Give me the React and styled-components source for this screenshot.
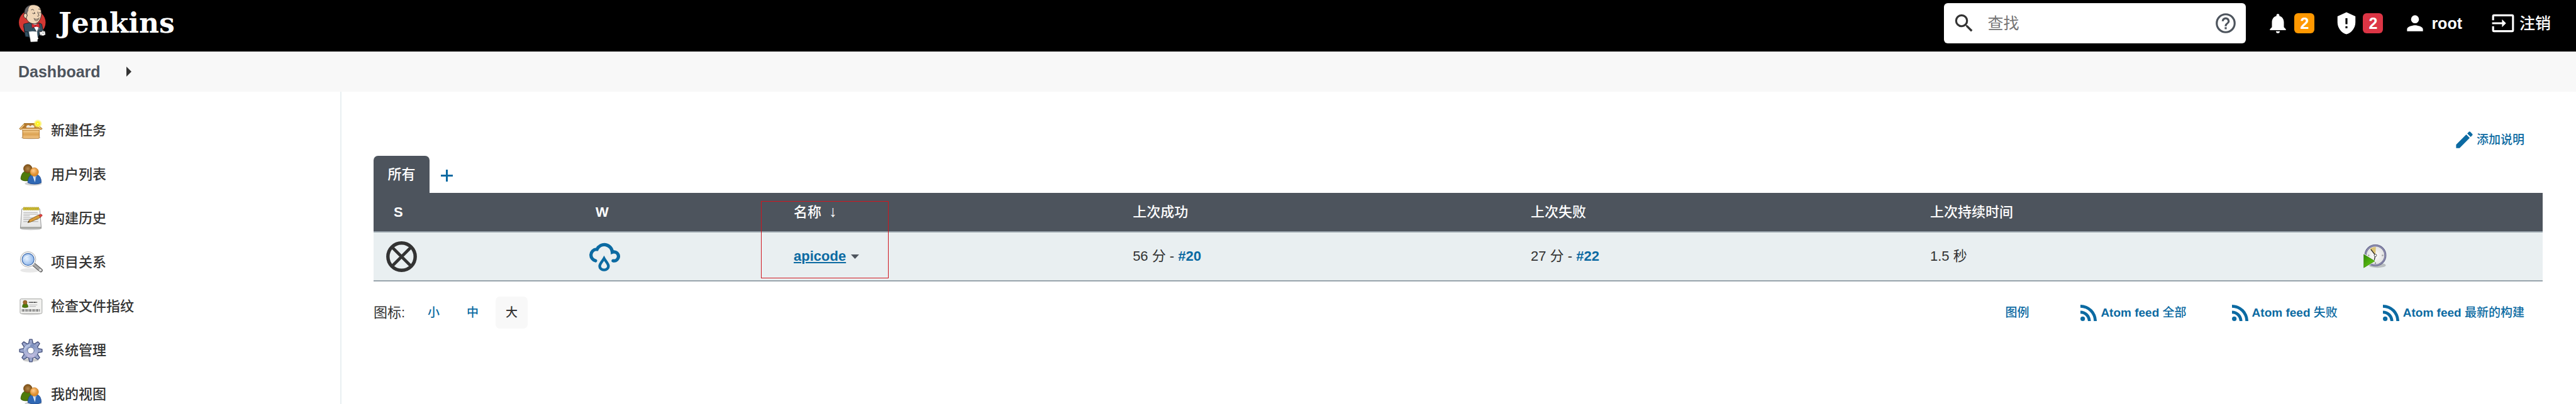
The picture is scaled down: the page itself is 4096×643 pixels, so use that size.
import React from "react";
import styled, { createGlobalStyle } from "styled-components";

const sans = '"Liberation Sans", "Noto Sans CJK SC", sans-serif';
const blue = "#0b6aa2";
const slate = "#4d545d";
const ink = "#333333";

const GlobalStyle = createGlobalStyle`
  *, *::before, *::after { box-sizing: border-box; }
  body { margin: 0; background: #fff; color: ${ink}; font-family: ${sans}; font-size: 22px; line-height: 32px; }
  a { color: inherit; text-decoration: none; }
  button, input { font: inherit; color: inherit; border: 0; padding: 0; background: none; }
  svg { display: block; flex: none; }
`;

const Page = styled.div`
  display: flex;
  flex-direction: column;
  height: 100vh;
  overflow: hidden;
`;

/* Header */
const Header = styled.header`
  display: flex;
  align-items: center;
  flex: none;
  height: 82px;
  padding: 0 40px 8px 29px;
  background: #000;
  color: #fff;
  font-size: 25px;
`;
const Brand = styled.a`
  display: flex;
  align-items: center;
  gap: 20px;
  margin-right: auto;
`;
const BrandName = styled.span`
  font-family: "DejaVu Serif", serif;
  font-size: 44px;
  line-height: 60px;
  font-weight: 700;
`;
const SearchBox = styled.form`
  display: flex;
  align-items: center;
  gap: 18px;
  width: 480px;
  height: 64px;
  padding: 0 13px;
  border-radius: 6px;
  background: #fff;
  color: ${ink};
`;
const SearchInput = styled.input`
  flex: 1;
  min-width: 0;
  height: 40px;
  outline: 0;
  &::placeholder { color: #757575; opacity: 1; }
`;
const HelpLink = styled.a`
  color: ${slate};
`;
const HeaderLinks = styled.nav`
  display: flex;
  align-items: center;
  gap: 32px;
  margin-left: 32px;
`;
const HeaderLink = styled.a`
  display: flex;
  align-items: center;
  gap: 7px;
  font-weight: ${(p) => p.$weight || 700};
  margin-right: ${(p) => (p.$spaced ? 14 : 0)}px;
`;
const Badge = styled.span`
  width: 32px;
  height: 32px;
  border-radius: 6px;
  background: ${(p) => p.$color};
  text-align: center;
`;

/* Breadcrumbs */
const Crumbs = styled.nav`
  display: flex;
  align-items: center;
  flex: none;
  gap: 41px;
  height: 64px;
  padding-left: 29px;
  background: #f8f8f8;
  color: ${slate};
  font-size: 25px;
  font-weight: 700;
`;

/* Body */
const Body = styled.div`
  display: flex;
  flex: 1;
`;
const Side = styled.aside`
  flex: none;
  width: 543px;
  padding: 27px 0 0 30px;
  border-right: 2px solid #e9eff1;
`;
const TaskLink = styled.a`
  display: flex;
  align-items: center;
  gap: 13px;
  height: 70px;
  font-weight: 500;
`;
const Main = styled.main`
  flex: 1;
  min-width: 0;
  padding: 59px 53px 0 51px;
`;
const Description = styled.div`
  display: flex;
  justify-content: flex-end;
  padding-right: 29px;
  margin-bottom: 8px;
`;
const SmallLink = styled.a`
  display: flex;
  align-items: center;
  gap: ${(p) => p.$gap || 6}px;
  height: 35px;
  color: ${blue};
  font-size: 19px;
  font-weight: 500;
`;
const Tabs = styled.div`
  display: flex;
  height: 59px;
`;
const Tab = styled.a`
  width: 89px;
  border-radius: 7px 7px 0 0;
  background: ${slate};
  color: #fff;
  text-align: center;
  line-height: 60px;
  font-weight: 500;
`;
const AddTab = styled.a`
  display: flex;
  align-items: center;
  padding: 3px 18px 0;
  color: ${blue};
`;

/* Jobs table */
const TableWrap = styled.div`
  position: relative;
`;
const Table = styled.table`
  width: 100%;
  table-layout: fixed;
  border-collapse: separate;
  border-spacing: 0;
  white-space: nowrap;
`;
const Col = styled.col`
  width: ${(p) => p.$share};
`;
const Th = styled.th`
  height: 63px;
  padding: 0 0 0 ${(p) => (p.$icon ? 32 : 20)}px;
  border-bottom: 2px solid #98a3ab;
  background: ${slate};
  color: #fff;
  text-align: left;
  font-weight: ${(p) => (p.$icon ? 700 : 500)};
`;
const Td = styled.td`
  height: 78px;
  padding: 0 0 0 20px;
  border-bottom: 2px solid #98a3ab;
  background: #e9eff1;
`;
const SortMark = styled.span`
  margin-left: 12px;
  font-family: "Liberation Serif", serif;
  font-size: 25px;
  font-weight: 400;
`;
const BuildLink = styled.a`
  color: ${blue};
  font-weight: 700;
`;
const JobCell = styled.div`
  display: flex;
  align-items: center;
  gap: 8px;
`;
const JobLink = styled.a`
  color: ${blue};
  font-weight: 700;
  text-decoration: underline;
  text-decoration-thickness: 2px;
  text-underline-offset: 2px;
  text-decoration-skip-ink: auto;
`;
const Highlight = styled.div`
  position: absolute;
  left: 17.85%;
  top: 13px;
  width: 203px;
  height: 123px;
  border: 1px solid #d0161f;
  pointer-events: none;
`;

/* Table footer */
const Footer = styled.div`
  display: flex;
  align-items: center;
  margin-top: 24px;
  padding-right: 29px;
`;
const Sizes = styled.div`
  display: flex;
  align-items: center;
  gap: 11px;
  margin-right: auto;
`;
const SizeLabel = styled.span`
  width: 59px;
`;
const SizeButton = styled.button`
  width: 51px;
  height: 51px;
  border-radius: 7px;
  background: ${(p) => (p.$active ? "#f8f8f8" : "transparent")};
  color: ${(p) => (p.$active ? ink : blue)};
  font-size: 19px;
  font-weight: 500;
`;
const Feeds = styled.nav`
  display: flex;
  gap: 72px;
`;
const LegendLink = styled(SmallLink)`
  margin-right: 10px;
`;
const FeedText = styled.span`
  white-space: pre;
`;

const Glyph = ({ d, size = 38, box = "0 0 24 24", label }) => (
  <svg width={size} height={size} viewBox={box} fill="currentColor" fillRule="evenodd" role={label ? "img" : undefined} aria-label={label} aria-hidden={label ? undefined : true}>
    <path d={d} />
  </svg>
);

const paths = {
  search: "M15.5 14h-.79l-.28-.27A6.47 6.47 0 0 0 16 9.5 6.5 6.5 0 1 0 9.5 16c1.61 0 3.09-.59 4.23-1.57l.27.28v.79l5 4.99L20.49 19zM9.5 14a4.5 4.5 0 1 1 0-9 4.5 4.5 0 0 1 0 9z",
  help: "M11 18h2v-2h-2zm1-16a10 10 0 1 0 0 20 10 10 0 0 0 0-20zm0 18a8 8 0 1 1 0-16 8 8 0 0 1 0 16zm0-14a4 4 0 0 0-4 4h2c0-1.1.9-2 2-2s2 .9 2 2c0 2-3 1.75-3 5h2c0-2.25 3-2.5 3-5a4 4 0 0 0-4-4z",
  bell: "M12 22c1.1 0 2-.9 2-2h-4c0 1.1.89 2 2 2zm6-6v-5c0-3.07-1.64-5.64-4.5-6.32V4c0-.83-.67-1.5-1.5-1.5s-1.5.67-1.5 1.5v.68C7.63 5.36 6 7.92 6 11v5l-2 2v1h16v-1z",
  shield: "M12 1 3 5v6c0 5.55 3.84 10.74 9 12 5.16-1.26 9-6.45 9-12V5zM11 7h2v6h-2zM11 15h2v2h-2z",
  user: "M12 12a4 4 0 1 0 0-8 4 4 0 0 0 0 8zm0 2c-2.67 0-8 1.34-8 4v2h16v-2c0-2.66-5.33-4-8-4z",
  logout: "M21 3H3a2 2 0 0 0-2 2v4h2V5h18v14H3v-4H1v4a2 2 0 0 0 2 2h18a2 2 0 0 0 2-2V5a2 2 0 0 0-2-2zM11 16l4-4-4-4v3H1v2h10z",
  pencil: "M3 17.25V21h3.75L17.81 9.94l-3.75-3.75zM20.71 7.04a1 1 0 0 0 0-1.41l-2.34-2.34a1 1 0 0 0-1.41 0l-1.83 1.83 3.75 3.75z",
  rss: "M6.18 15.64a2.18 2.18 0 1 1 0 4.36 2.18 2.18 0 0 1 0-4.36M4 4.44A15.56 15.56 0 0 1 19.56 20h-2.83A12.73 12.73 0 0 0 4 7.27zM4 10.1a9.9 9.9 0 0 1 9.9 9.9h-2.83A7.07 7.07 0 0 0 4 12.93z",
};

const Butler = () => (
  <svg width="44" height="60" viewBox="108 24 164 226" aria-hidden="true">
    <ellipse cx="191" cy="132" rx="80" ry="76" fill="#d33833" />
    <path d="M140 142 178 132l20 18 36-15 14 8 8 40-20 6-6 28-20 8-60-8-4-22z" fill="#335061" stroke="#101820" strokeWidth="3" />
    <path d="M188 140 218 190 238 172 230 140z" fill="#fff" stroke="#101820" strokeWidth="2" />
    <path d="M194 158 210 184 198 176zM232 158 222 184 234 174z" fill="#6d8ba0" stroke="#101820" strokeWidth="2" />
    <path d="M158 42c14-16 44-20 64-10 18 8 24 28 24 50-2 28-16 54-40 58-24 2-44-14-50-32-14 0-18-16-12-26 0-18 4-30 14-40z" fill="#f0d6b7" stroke="#231f20" strokeWidth="3" />
    <path d="M180 29c-24 4-38 26-35 50l8 4c2 6 4 8 8 10-4-16 0-24 4-30 0-16 6-26 15-34z" fill="#6d6b6d" stroke="#231f20" strokeWidth="2" />
    <path d="M143 82c-6 8-2 24 12 26l6-20c-6-10-12-12-18-6z" fill="#f0d6b7" stroke="#231f20" strokeWidth="3" />
    <path d="M184 58q9-10 18 2M228 52q8-4 12 6M192 76q8 9 15 0M232 72q6 8 11-2M224 68q2 14 8 22-5 8-11 4M200 108q18 12 34-4M202 114q16 18 28-4M203 70l4 10" fill="none" stroke="#231f20" strokeWidth="3" />
    <path d="M188 140 208 148 232 138 236 162 214 156 190 164z" fill="#e32b31" stroke="#6b1014" strokeWidth="2" />
    <path d="M206 146h9v12h-9z" fill="#b51d24" />
    <path d="M172 188c16-4 34-2 48 0l2 58-40 2z" fill="#fff" stroke="#d8d8d8" strokeWidth="2" />
    <path d="M218 190l4 24 6 16-8 6z" fill="#fff" />
    <path d="M234 186l10 4 10-10 14 6 2 20-14 6-20-4z" fill="#fff" stroke="#231f20" strokeWidth="2" />
    <path d="M252 186l10 2M250 196l12 2M240 202l8 2" stroke="#231f20" strokeWidth="2" />
    <path d="M138 150l8 38 18 0 8 34" fill="none" stroke="#101820" strokeWidth="3" />
  </svg>
);

const TaskIcon = ({ children }) => (
  <svg width="38" height="38" viewBox="0 0 48 48" aria-hidden="true">
    {children}
  </svg>
);

const PackageIcon = () => (
  <TaskIcon>
    <defs>
      <linearGradient id="boxFront" x1="0" y1="0" x2="0" y2="1">
        <stop offset="0" stopColor="#f4cc8c" /><stop offset="0.5" stopColor="#dba253" /><stop offset="1" stopColor="#f5c98a" />
      </linearGradient>
      <radialGradient id="spark">
        <stop offset="0" stopColor="#fff" /><stop offset="0.25" stopColor="#fff200" /><stop offset="0.55" stopColor="#fdf25a" /><stop offset="1" stopColor="#fdf25a" stopOpacity="0" />
      </radialGradient>
    </defs>
    <ellipse cx="24" cy="38" rx="20" ry="3" fill="#000" opacity="0.15" />
    <path d="M11 9.500H35L41 20H6z" fill="#b77b31" stroke="#8f5902" />
    <path d="M15 15q4-5 8 0 4-5 8 0v3H15z" fill="#f1ece2" />
    <path d="M11 9.500 1 20 4 22 12 13zM35 9.500 47 20 44 22 34 13z" fill="#eec07a" stroke="#8f5902" />
    <path d="M5 19.500H43L40.500 24H8z" fill="#fbdcae" stroke="#b87824" />
    <path d="M7.500 23H41V38q0 1.500-1.500 1.500H9q-1.500 0-1.500-1.500z" fill="url(#boxFront)" stroke="#a5671a" />
    <circle cx="38" cy="10" r="9" fill="url(#spark)" />
  </TaskIcon>
);

const PeopleIcon = () => (
  <TaskIcon>
    <defs>
      <radialGradient id="brownHead"><stop offset="0" stopColor="#b5874c" /><stop offset="1" stopColor="#7d4f14" /></radialGradient>
      <radialGradient id="orangeHead" cx="0.4" cy="0.35"><stop offset="0" stopColor="#ffcf91" /><stop offset="1" stopColor="#e08f2f" /></radialGradient>
    </defs>
    <ellipse cx="29" cy="42" rx="17" ry="4" fill="#000" opacity="0.18" />
    <path d="M4 30q2-11 9-13h11q8 3 8 12v4q-5 4-15 3.500Q7 37 4 33z" fill="#4e7a0a" stroke="#32520a" />
    <circle cx="18" cy="12" r="8.500" fill="url(#brownHead)" stroke="#70450f" />
    <path d="M18 40q0-13 8-16h11q8 3 8 16-4 3-13 3t-14-3z" fill="#2f68b5" stroke="#1c4587" />
    <path d="M28 26h7l-3 13z" fill="#edf3fb" />
    <path d="M31 26h3l-1 12z" fill="#8fb3e4" />
    <circle cx="31" cy="18.500" r="8.500" fill="url(#orangeHead)" stroke="#c67a22" />
  </TaskIcon>
);

const NotepadIcon = () => (
  <TaskIcon>
    <defs>
      <linearGradient id="sheet" x1="0" y1="0" x2="0" y2="1"><stop offset="0" stopColor="#fff" /><stop offset="1" stopColor="#e3e3e3" /></linearGradient>
    </defs>
    <ellipse cx="24" cy="45" rx="20" ry="2" fill="#000" opacity="0.2" />
    <path d="M6 4.500H42L45 43.500H3z" fill="url(#sheet)" stroke="#777" />
    <path d="M4 40.500H44.500V44H3.500z" fill="#a9aaa6" />
    <path d="M9 11.500H38M9 15H39M9 18.500H22M9 22.500H39M9 26H39M9 30H22M26 30H39" stroke="#a3a3a3" strokeWidth="1.200" />
    {[9, 13, 17, 21, 25, 29, 33, 37].map((x) => (
      <rect key={x} x={x} y="1" width="3" height="6" rx="1.500" fill="#f0dd37" stroke="#907f0a" />
    ))}
    <path d="M18 32 21.500 26 40 16.500 43.500 21.500 24 30.500z" fill="#d99c3c" stroke="#7a5210" />
    <path d="M18 32l2-3.500 1.500 2z" fill="#222" />
    <path d="M40 16.500l3.500-1.500q3.500 0 3.500 3l-3.500 3.500z" fill="#e0403c" stroke="#8a1d1d" strokeWidth="0.600" />
  </TaskIcon>
);

const LensIcon = () => (
  <TaskIcon>
    <defs>
      <radialGradient id="glass" cx="0.4" cy="0.45"><stop offset="0" stopColor="#e4f1ff" /><stop offset="1" stopColor="#9dc0ee" /></radialGradient>
    </defs>
    <ellipse cx="22" cy="39.500" rx="19" ry="4.500" fill="#000" opacity="0.09" />
    <path d="M29 27 44 39.500" stroke="#555" strokeWidth="7.500" strokeLinecap="round" />
    <path d="M29 27 44 39.500" stroke="#a9a9a9" strokeWidth="5" strokeLinecap="round" />
    <circle cx="43" cy="39" r="2.500" fill="#e4e4e4" />
    <circle cx="18.500" cy="17.500" r="15.500" fill="#f5f5f5" stroke="#9b9b9b" />
    <circle cx="18.500" cy="17.500" r="12" fill="url(#glass)" stroke="#3c6aae" strokeWidth="1.500" />
    <path d="M9 18q3-9 14-9-9 4-14 9z" fill="#fff" opacity="0.6" />
  </TaskIcon>
);

const CardIcon = () => (
  <TaskIcon>
    <ellipse cx="24" cy="39" rx="19" ry="2" fill="#000" opacity="0.15" />
    <rect x="2.500" y="8.500" width="44" height="29.500" rx="2" fill="#f2f2f0" stroke="#8b8d89" />
    <path d="M7 25q0-7 5.500-8 6 1 6 8-6 2.500-11.500 0z" fill="#4e7a0a" stroke="#32520a" strokeWidth="0.700" />
    <circle cx="12.500" cy="15.500" r="4" fill="#a06a2c" stroke="#70450f" strokeWidth="0.700" />
    <path d="M20 15.500h17" stroke="#222" strokeWidth="2" strokeDasharray="2 1 3 .7" />
    <path d="M21 20.500h16M21 23.500h13" stroke="#bbb" strokeWidth="1.500" />
    <path d="M6 31.500h37" stroke="#555" strokeWidth="5" strokeDasharray="1 1.200 1.600 1 .7 1.500" />
  </TaskIcon>
);

const GearIcon = () => (
  <TaskIcon>
    <defs>
      <linearGradient id="steel" x1="0" y1="0" x2="0" y2="1"><stop offset="0" stopColor="#6c82b4" /><stop offset="0.55" stopColor="#a7b2d6" /><stop offset="1" stopColor="#c9bfe2" /></linearGradient>
    </defs>
    <ellipse cx="24" cy="43" rx="16" ry="3.500" fill="#000" opacity="0.2" />
    <g fill="#8898c4" stroke="#4a5680" strokeWidth="2" strokeLinejoin="round">
      {[0, 45, 90, 135, 180, 225, 270, 315].map((a) => (
        <path key={a} d="M19.500 11 21.500 1.500h5L28.500 11z" transform={`rotate(${a} 24 24)`} />
      ))}
      <circle cx="24" cy="24" r="15" />
    </g>
    <circle cx="24" cy="24" r="14.800" fill="url(#steel)" />
    <g fill="#a4aed3">
      {[0, 45, 90, 135, 180, 225, 270, 315].map((a) => (
        <path key={a} d="M20.300 12 22 2.300h4L27.700 12z" transform={`rotate(${a} 24 24)`} opacity="0.700" />
      ))}
    </g>
    <path d="M10 20q4-9 14-10l-2 6q-8 1-10 10z" fill="#c8d3ec" opacity="0.700" />
    <circle cx="24" cy="24" r="6.500" fill="#fff" stroke="#4a5680" />
  </TaskIcon>
);

const ScheduleIcon = () => (
  <svg width="38" height="38" viewBox="0 0 48 48" role="img" aria-label="立即构建">
    <defs>
      <radialGradient id="dial"><stop offset="0" stopColor="#fff" /><stop offset="1" stopColor="#dedede" /></radialGradient>
      <linearGradient id="go" x1="0" y1="0" x2="1" y2="1"><stop offset="0" stopColor="#2f8a05" /><stop offset="1" stopColor="#6fd317" /></linearGradient>
    </defs>
    <ellipse cx="28" cy="42" rx="17" ry="5" fill="#000" opacity="0.2" />
    <circle cx="24" cy="22" r="20" fill="url(#dial)" stroke="#68688f" strokeWidth="4" />
    <circle cx="24" cy="22" r="20" fill="none" stroke="#b6b6d0" strokeWidth="1" />
    <path d="M24 22 13 9q5-4 12-4z" fill="#dcc477" />
    <path d="M24 22 15 10M24 22l-3 13" stroke="#222" strokeWidth="1.600" />
    <path d="M37 22h3M24 36v3M9 22h3" stroke="#999" strokeWidth="2.500" />
    <circle cx="24" cy="22" r="2.500" fill="#fff" stroke="#222" />
    <path d="M.700 20V47L23 33.500z" fill="url(#go)" stroke="#fff" strokeWidth="2.500" />
    <path d="M.700 20V47L23 33.500z" fill="url(#go)" stroke="#347a0c" strokeWidth="0.800" />
  </svg>
);

const AbortedIcon = () => (
  <svg width="49" height="49" viewBox="0 0 49 49" fill="none" stroke={ink} role="img" aria-label="已取消">
    <circle cx="24.500" cy="24.500" r="21.700" strokeWidth="5.400" />
    <path d="M9.500 9.500l30 30M39.500 9.500l-30 30" strokeWidth="4.600" />
  </svg>
);

const RainIcon = () => (
  <svg width="51" height="47" viewBox="0 0 64 59" fill="none" stroke={blue} strokeWidth="6.500" role="img" aria-label="天气">
    <path d="M15 37.700A11.600 11.600 0 0 1 16.500 14.800H18A16 16 0 0 1 48.500 20.500 9 9 0 1 1 50 37.700" strokeLinecap="round" />
    <path d="M32 33C29 38.500 23.300 43.500 23.300 48.500A8.700 7.500 0 0 0 40.700 48.500C40.700 43.500 35 38.500 32 33Z" strokeWidth="5.500" />
  </svg>
);

const tasks = [
  ["新建任务", PackageIcon],
  ["用户列表", PeopleIcon],
  ["构建历史", NotepadIcon],
  ["项目关系", LensIcon],
  ["检查文件指纹", CardIcon],
  ["系统管理", GearIcon],
  ["我的视图", PeopleIcon],
];
const shares = ["9.31%", "9.48%", "15.63%", "18.35%", "18.41%", "19.98%", "8.84%"];
const sizes = ["小", "中", "大"];
const feeds = ["全部", "失败", "最新的构建"];

export default function App() {
  return (
    <Page>
      <GlobalStyle />
      <Header>
        <Brand href="#">
          <Butler />
          <BrandName>Jenkins</BrandName>
        </Brand>
        <SearchBox role="search">
          <Glyph d={paths.search} />
          <SearchInput type="text" placeholder="查找" aria-label="查找" />
          <HelpLink href="#help" aria-label="帮助"><Glyph d={paths.help} /></HelpLink>
        </SearchBox>
        <HeaderLinks>
          <HeaderLink href="#alerts"><Glyph d={paths.bell} /><Badge $color="#ff9800">2</Badge></HeaderLink>
          <HeaderLink href="#security"><Glyph d={paths.shield} /><Badge $color="#dc3545">2</Badge></HeaderLink>
          <HeaderLink href="#user" $spaced><Glyph d={paths.user} />root</HeaderLink>
          <HeaderLink href="#logout" $weight={500}><Glyph d={paths.logout} />注销</HeaderLink>
        </HeaderLinks>
      </Header>
      <Crumbs>
        <a href="#dashboard">Dashboard</a>
        <svg width="8" height="16" viewBox="0 0 8 16" fill={ink} aria-hidden="true"><path d="M0 0 8 8 0 16z" /></svg>
      </Crumbs>
      <Body>
        <Side>
          {tasks.map(([name, Icon]) => (
            <TaskLink key={name} href="#task"><Icon />{name}</TaskLink>
          ))}
        </Side>
        <Main>
          <Description>
            <SmallLink href="#description" $gap={2}><Glyph d={paths.pencil} size={35} />添加说明</SmallLink>
          </Description>
          <Tabs>
            <Tab href="#all">所有</Tab>
            <AddTab href="#new" aria-label="新建视图">
              <svg width="19" height="19" viewBox="0 0 19 19" stroke={blue} strokeWidth="3" aria-hidden="true"><path d="M0 9.500H19M9.500 0V19" /></svg>
            </AddTab>
          </Tabs>
          <TableWrap>
            <Table>
              <colgroup>{shares.map((s, i) => <Col key={i} $share={s} />)}</colgroup>
              <thead>
                <tr>
                  <Th $icon>S</Th>
                  <Th $icon>W</Th>
                  <Th>名称<SortMark>↓</SortMark></Th>
                  <Th>上次成功</Th>
                  <Th>上次失败</Th>
                  <Th>上次持续时间</Th>
                  <Th />
                </tr>
              </thead>
              <tbody>
                <tr>
                  <Td><AbortedIcon /></Td>
                  <Td><RainIcon /></Td>
                  <Td>
                    <JobCell>
                      <JobLink href="#apicode">apicode</JobLink>
                      <svg width="13" height="7" viewBox="0 0 13 7" fill={slate} aria-hidden="true"><path d="M0 0H13L6.500 7z" /></svg>
                    </JobCell>
                  </Td>
                  <Td>56 分 - <BuildLink href="#20">#20</BuildLink></Td>
                  <Td>27 分 - <BuildLink href="#22">#22</BuildLink></Td>
                  <Td>1.5 秒</Td>
                  <Td><ScheduleIcon /></Td>
                </tr>
              </tbody>
            </Table>
            <Highlight />
          </TableWrap>
          <Footer>
            <Sizes>
              <SizeLabel>图标:</SizeLabel>
              {sizes.map((s) => <SizeButton key={s} type="button" $active={s === "大"}>{s}</SizeButton>)}
            </Sizes>
            <Feeds>
              <LegendLink href="#legend">图例</LegendLink>
              {feeds.map((f) => (
                <SmallLink key={f} href="#feed">
                  <Glyph d={paths.rss} size={26} box="4 4.44 15.56 15.56" />
                  <FeedText><b>Atom feed </b>{f}</FeedText>
                </SmallLink>
              ))}
            </Feeds>
          </Footer>
        </Main>
      </Body>
    </Page>
  );
}
